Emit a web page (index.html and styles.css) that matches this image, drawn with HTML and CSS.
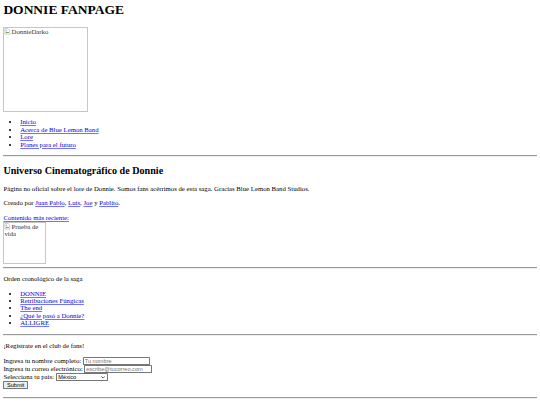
FILE: index.html
```html
<!DOCTYPE html>
<html lang="es">
<head>
<meta charset="utf-8">
<title>Donnie Fanpage</title>
<link rel="stylesheet" href="styles.css">
</head>
<body class="page">
<h1 class="title">DONNIE FANPAGE</h1>
<div class="hero">
  <span class="broken big"><svg class="bicon" viewBox="0 0 16 16" width="16" height="16"><path d="M2 1.5h8l3.5 3.5v9.5h-11.5z" fill="#fff" stroke="#8a8a8a"/><path d="M3.5 12l3-4 2 2.5 1.5-1.5 2 3z" fill="#5a9a3a"/><circle cx="5.5" cy="5.5" r="1.3" fill="#4a7fc0"/></svg>DonnieDarko</span>
</div>
<ul class="nav">
  <li><a href="#">Inicio</a></li>
  <li><a href="#">Acerca de Blue Lemon Band</a></li>
  <li><a href="#">Lore</a></li>
  <li><a href="#">Planes para el futuro</a></li>
</ul>
<hr class="rule">
<h2 class="subtitle">Universo Cinematográfico de Donnie</h2>
<p class="para">Página no oficial sobre el lore de Donnie. Somos fans acérrimos de esta saga. Gracias Blue Lemon Band Studios.</p>
<p class="para">Creado por <a href="#">Juan Pablo</a>, <a href="#">Luis</a>, <a href="#">Joe</a> y <a href="#">Pablito</a>.</p>
<div class="recent">
  <a href="#">Contenido más reciente:</a><br>
  <span class="broken small"><svg class="bicon" viewBox="0 0 16 16" width="16" height="16"><path d="M2 1.5h8l3.5 3.5v9.5h-11.5z" fill="#fff" stroke="#8a8a8a"/><path d="M3.5 12l3-4 2 2.5 1.5-1.5 2 3z" fill="#5a9a3a"/><circle cx="5.5" cy="5.5" r="1.3" fill="#4a7fc0"/></svg>Prueba de vida</span>
</div>
<hr class="rule">
<p class="para">Orden cronológico de la saga</p>
<ul class="nav">
  <li><a href="#">DONNIE</a></li>
  <li><a href="#">Retribuciones Fúngicas</a></li>
  <li><a href="#">The end</a></li>
  <li><a href="#">¿Qué le pasó a Donnie?</a></li>
  <li><a href="#">ALLIGRE</a></li>
</ul>
<hr class="rule">
<p class="para">¡Regístrate en el club de fans!</p>
<form class="signup">
  <label>Ingresa tu nombre completo: <input class="field" type="text" placeholder="Tu nombre"></label><br>
  <label>Ingresa tu correo electrónico: <input class="field" type="email" placeholder="escribe@tucorreo.com"></label><br>
  <label>Selecciona tu país: <span class="select-wrap"><select class="choice"><option>México</option><option>Colombia</option><option>Argentina</option></select><svg class="chev" viewBox="0 0 10 6" width="10" height="6"><path d="M1 1l4 4 4-4" fill="none" stroke="#000" stroke-width="1.6"/></svg></span></label><br>
  <button class="submit" type="button">Submit</button>
</form>
<hr class="rule">
</body>
</html>
```
FILE: styles.css
```css
html {
  zoom: 0.421875;
}
.page {
  margin: 8px;
  font-family: "Liberation Serif", "Times New Roman", serif;
  font-size: 16px;
  line-height: 17.71px;
  color: #000;
  background: #fff;
  overflow: hidden;
}
.title {
  font-size: 2em;
  line-height: 35.42px;
  margin: 0 0 0.67em;
}
.hero {
  line-height: 0;
}
.broken {
  display: inline-block;
  box-sizing: border-box;
  border: 1px solid #c7c7c7;
  line-height: 17.71px;
  overflow: hidden;
  font-size: 16px;
  color: #333;
}
.big {
  width: 200px;
  height: 200px;
}
.small {
  width: 100px;
  height: 100px;
  vertical-align: top;
  margin-top: 2px;
}
.bicon {
  vertical-align: -2px;
  margin-right: 1px;
}
.nav {
  margin: 16px 0;
  padding-left: 40px;
}
a {
  color: #0000ee;
  text-decoration-thickness: 1px;
  text-decoration-color: rgba(0, 0, 238, 0.55);
}
.rule {
  border: none;
  border-top: 1px solid #9a9a9a;
  border-bottom: 1px solid #eee;
  margin: 8px 0;
}
.subtitle {
  font-size: 1.5em;
  line-height: 26.57px;
  margin: 0.83em 0;
}
.para {
  margin: 16px 0;
}
.recent {
  margin: 16px 0 -2px;
}
.signup {
  margin: 0 0 18px;
}
.field {
  box-sizing: border-box;
  width: 160px;
  height: 19px;
  font-family: "Liberation Sans", Arial, sans-serif;
  font-size: 13.333px;
  padding: 1px 2px;
  border: 1px solid #767676;
  border-radius: 2px;
}
.select-wrap {
  position: relative;
  display: inline-block;
}
.choice {
  appearance: none;
  box-sizing: border-box;
  width: 124px;
  height: 19px;
  font-family: "Liberation Sans", Arial, sans-serif;
  font-size: 13.333px;
  padding: 0 4px;
  border: 1px solid #767676;
  border-radius: 2px;
  background: #fff;
  color: #000;
}
.chev {
  position: absolute;
  right: 7px;
  top: 7px;
  pointer-events: none;
}
.submit {
  font-family: "Liberation Sans", Arial, sans-serif;
  font-size: 13.333px;
  padding: 1px 6px;
  border: 1px solid #767676;
  border-radius: 2px;
  background: #efefef;
  color: #000;
}
```
